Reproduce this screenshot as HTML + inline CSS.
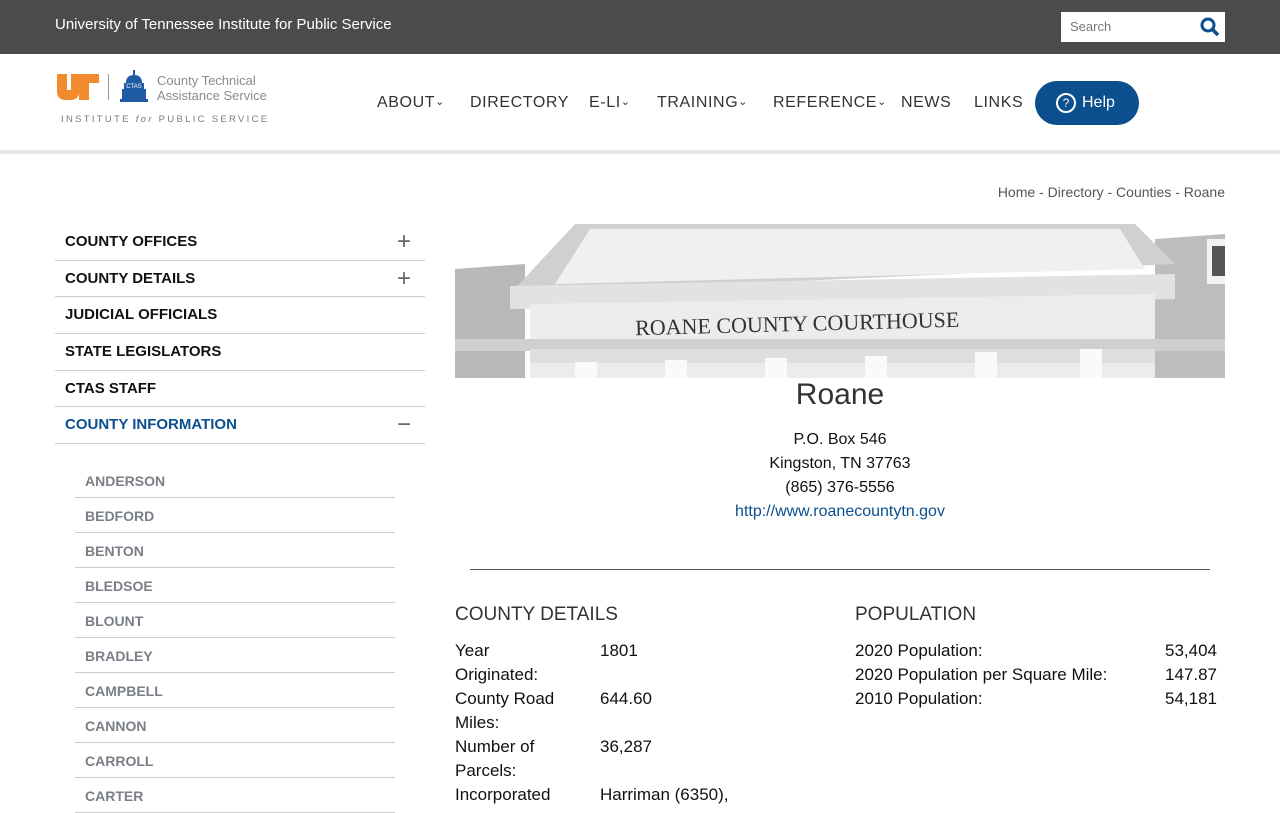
<!DOCTYPE html>
<html><head><meta charset="utf-8"><style>
*{margin:0;padding:0;box-sizing:border-box}
body{width:1280px;height:800px;overflow:hidden;font-family:"Liberation Sans",sans-serif;background:#fff;color:#111;position:relative}
.top{height:54px;background:#4b4b4d;position:relative}
.top .t{position:absolute;left:55px;top:16px;color:#fff;font-size:15px}
.search{position:absolute;left:1061px;top:12px;width:164px;height:30px;background:#fff}
.search span{position:absolute;left:9px;top:7px;font-size:13px;color:#777}
.hdr{position:absolute;left:0;top:54px;width:1280px;height:100px;border-bottom:4px solid #e8e8e8}
.nav{position:absolute;top:40px;font-size:16px;color:#333;letter-spacing:.6px}
.nav small{font-size:11px;position:relative;top:-2px}
.help{position:absolute;left:1035px;top:27px;width:104px;height:44px;border-radius:22px;background:#0b4f8e;color:#fff;font-size:16px}
.bc{position:absolute;right:55px;top:184px;font-size:14px;color:#555}
.side{position:absolute;left:55px;top:224px;width:370px}
.side .i{height:36.7px;border-bottom:1px solid #ccc;font-weight:bold;font-size:15px;padding:9px 10px;position:relative}
.side .i b{position:absolute;right:14px;top:4px;font-size:24px;font-weight:normal;color:#666}
.sub{position:absolute;left:75px;top:463px;width:320px}
.sub div{height:35px;border-bottom:1px solid #ccc;font-weight:bold;font-size:14px;color:#7a7f87;padding:10px 10px}
.c{position:absolute;text-align:center;left:455px;width:770px}
.h{position:absolute;font-size:19px;color:#333}
.r{position:absolute;font-size:17px;line-height:24px}
</style></head><body>
<div class="top"><div class="t">University of Tennessee Institute for Public Service</div>
<div class="search"><span>Search</span><svg style="position:absolute;right:5px;top:5px" width="20" height="20" viewBox="0 0 20 20"><circle cx="8" cy="8" r="6" fill="none" stroke="#0b4f8e" stroke-width="3"/><path d="M12.5 12.5L18 18" stroke="#0b4f8e" stroke-width="3.5"/></svg></div></div>
<div class="hdr">
<svg style="position:absolute;left:57px;top:20px" width="42" height="26" viewBox="0 0 42 26"><path d="M0 0H10V16H14V0H42V9H32V26H22V9H22V18Q22 26 13 26H9Q0 26 0 17Z" fill="#f28a2e"/></svg>
<div style="position:absolute;left:108px;top:20px;width:1px;height:26px;background:#999"></div>
<svg style="position:absolute;left:120px;top:16px" width="28" height="32" viewBox="0 0 28 32"><path d="M13 0h2v5h-2z M6 13Q6 5 14 5Q22 5 22 13Z M4 13h20v6H4z M2 19h24v10H2z M0 29h28v3H0z" fill="#1f5aa5"/><text x="14" y="18" font-size="6" fill="#fff" text-anchor="middle" font-family="Liberation Sans">CTAS</text></svg>
<div style="position:absolute;left:157px;top:19px;font-size:13px;color:#8a8c8f;line-height:15px">County Technical<br>Assistance Service</div>
<div style="position:absolute;left:61px;top:60px;font-size:9.5px;color:#7a7c7f;letter-spacing:2.3px">INSTITUTE <i>for</i> PUBLIC SERVICE</div>
<div class="nav" style="left:377px">ABOUT<small>⌄</small></div>
<div class="nav" style="left:470px">DIRECTORY</div>
<div class="nav" style="left:589px">E-LI<small>⌄</small></div>
<div class="nav" style="left:657px">TRAINING<small>⌄</small></div>
<div class="nav" style="left:773px">REFERENCE<small>⌄</small></div>
<div class="nav" style="left:901px">NEWS</div>
<div class="nav" style="left:974px">LINKS</div>
<div class="help"><span style="position:absolute;left:21px;top:12px;width:20px;height:20px;border:2px solid #fff;border-radius:50%;font-size:12px;text-align:center;line-height:16px">?</span><span style="position:absolute;left:47px;top:13px">Help</span></div>
</div>
<div class="bc">Home - Directory - Counties - Roane</div>
<div class="side">
<div class="i">COUNTY OFFICES<b>+</b></div>
<div class="i">COUNTY DETAILS<b>+</b></div>
<div class="i">JUDICIAL OFFICIALS</div>
<div class="i">STATE LEGISLATORS</div>
<div class="i">CTAS STAFF</div>
<div class="i" style="color:#0b4f8e">COUNTY INFORMATION<b>−</b></div>
</div>
<div class="sub"><div>ANDERSON</div><div>BEDFORD</div><div>BENTON</div><div>BLEDSOE</div><div>BLOUNT</div><div>BRADLEY</div><div>CAMPBELL</div><div>CANNON</div><div>CARROLL</div><div>CARTER</div></div>
<svg style="position:absolute;left:455px;top:224px" width="770" height="154" viewBox="0 0 770 154">
<rect width="770" height="154" fill="#ffffff"/>
<path d="M0 45L70 40 70 154H0Z" fill="#b8b8b8"/>
<path d="M700 15L770 10V154H700Z" fill="#bdbdbd"/>
<path d="M55 70L120 0H680L720 40Z" fill="#d0d0d0"/>
<path d="M100 60L135 5H665L690 45Z" fill="#f0f0f0"/>
<path d="M55 62L720 50V75L55 85Z" fill="#e2e2e2"/>
<path d="M75 80L700 70V154H75Z" fill="#ececec"/>
<rect x="0" y="115" width="770" height="12" fill="#cfcfcf"/>
<rect x="75" y="125" width="625" height="14" fill="#dedede"/>
<text x="180" y="106" font-family="Liberation Serif" font-size="22" fill="#333" transform="rotate(-1.5 380 95)">ROANE  COUNTY  COURTHOUSE</text>
<g fill="#fafafa"><rect x="120" y="138" width="22" height="16"/><rect x="210" y="136" width="22" height="18"/><rect x="310" y="134" width="22" height="20"/><rect x="410" y="132" width="22" height="22"/><rect x="520" y="128" width="22" height="26"/><rect x="625" y="125" width="22" height="29"/></g>
<rect x="752" y="15" width="18" height="45" fill="#f2f2f2"/><rect x="757" y="22" width="13" height="30" fill="#555"/>
</svg>
<div class="c" style="top:378px;font-size:30px;color:#333">Roane</div>
<div class="c" style="top:428px;font-size:16px;line-height:24px">P.O. Box 546<br>Kingston, TN 37763<br>(865) 376-5556<br><span style="color:#0b4f8e">http://www.roanecountytn.gov</span></div>
<div style="position:absolute;left:470px;top:569px;width:740px;height:1px;background:#555"></div>
<div class="h" style="left:455px;top:604px">COUNTY DETAILS</div>
<div class="h" style="left:855px;top:604px">POPULATION</div>
<div class="r" style="left:455px;top:639px">Year<br>Originated:<br>County Road<br>Miles:<br>Number of<br>Parcels:<br>Incorporated</div>
<div class="r" style="left:600px;top:639px">1801<br><br>644.60<br><br>36,287<br><br>Harriman (6350),</div>
<div class="r" style="left:855px;top:639px">2020 Population:<br>2020 Population per Square Mile:<br>2010 Population:</div>
<div class="r" style="left:1165px;top:639px">53,404<br>147.87<br>54,181</div>
</body></html>
